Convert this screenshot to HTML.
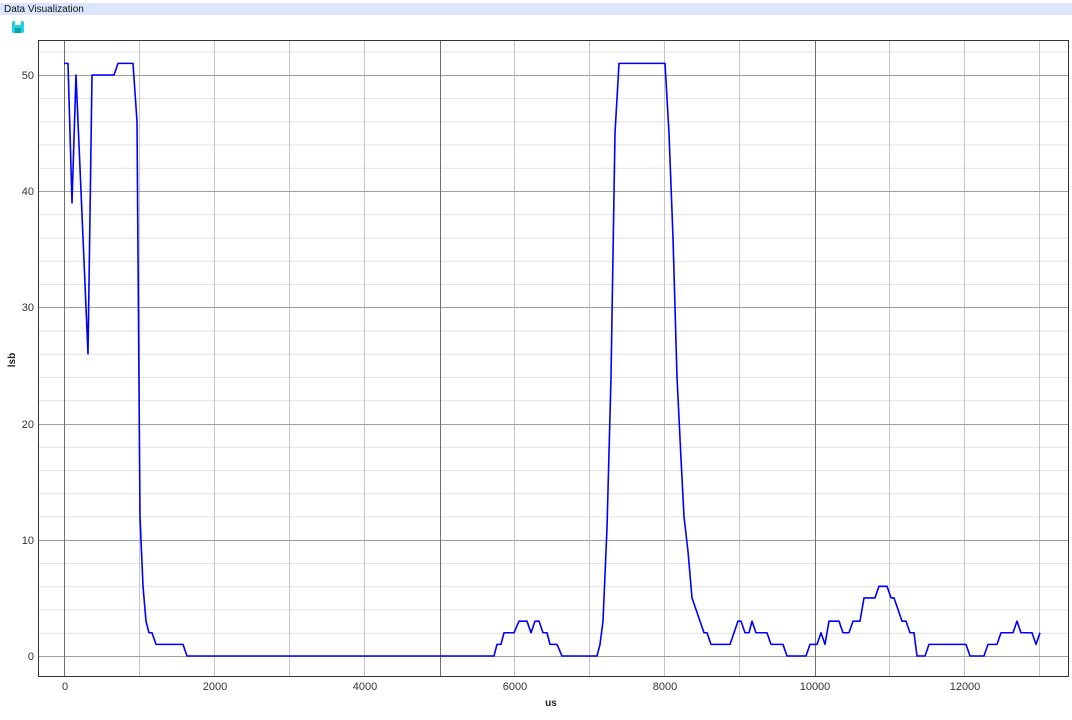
<!DOCTYPE html>
<html><head><style>
body{margin:0;width:1072px;height:720px;background:#fff;font-family:"Liberation Sans",sans-serif;overflow:hidden;position:relative}
.hdr{position:absolute;left:0;top:3px;width:1072px;height:12px;background:#dbe5fd;font-size:10px;line-height:13px;padding-left:4px;color:#111}
</style></head><body>
<div class="hdr">Data Visualization</div>
<svg width="1072" height="720" style="position:absolute;left:0;top:0">
<g>
<rect x="12" y="21" width="12" height="12" rx="2" fill="#22d0dd"/>
<rect x="15" y="21" width="6" height="4" fill="#fff"/>
<rect x="15" y="28" width="6" height="5" fill="#0aa0b0"/>
</g>
<g stroke="#e2e2e2" stroke-width="1">
<line x1="38" x2="1069" y1="633.2" y2="633.2"/><line x1="38" x2="1069" y1="610" y2="610"/><line x1="38" x2="1069" y1="586.7" y2="586.7"/><line x1="38" x2="1069" y1="563.5" y2="563.5"/>
<line x1="38" x2="1069" y1="516.9" y2="516.9"/><line x1="38" x2="1069" y1="493.7" y2="493.7"/><line x1="38" x2="1069" y1="470.5" y2="470.5"/><line x1="38" x2="1069" y1="447.2" y2="447.2"/>
<line x1="38" x2="1069" y1="400.7" y2="400.7"/><line x1="38" x2="1069" y1="377.5" y2="377.5"/><line x1="38" x2="1069" y1="354.2" y2="354.2"/><line x1="38" x2="1069" y1="331" y2="331"/>
<line x1="38" x2="1069" y1="284.5" y2="284.5"/><line x1="38" x2="1069" y1="261.3" y2="261.3"/><line x1="38" x2="1069" y1="238" y2="238"/><line x1="38" x2="1069" y1="214.8" y2="214.8"/>
<line x1="38" x2="1069" y1="168.3" y2="168.3"/><line x1="38" x2="1069" y1="145" y2="145"/><line x1="38" x2="1069" y1="121.8" y2="121.8"/><line x1="38" x2="1069" y1="98.6" y2="98.6"/>
<line x1="38" x2="1069" y1="52" y2="52"/>
</g>
<g stroke="#c4c4c4" stroke-width="1">
<line y1="40" y2="677" x1="139.5" x2="139.5"/><line y1="40" y2="677" x1="214.5" x2="214.5"/><line y1="40" y2="677" x1="289.5" x2="289.5"/><line y1="40" y2="677" x1="364.5" x2="364.5"/>
<line y1="40" y2="677" x1="514.5" x2="514.5"/><line y1="40" y2="677" x1="589.5" x2="589.5"/><line y1="40" y2="677" x1="664.5" x2="664.5"/><line y1="40" y2="677" x1="739.5" x2="739.5"/>
<line y1="40" y2="677" x1="889.5" x2="889.5"/><line y1="40" y2="677" x1="964.5" x2="964.5"/><line y1="40" y2="677" x1="1039.5" x2="1039.5"/>
</g>
<g stroke="#a0a0a0" stroke-width="1">
<line x1="38" x2="1069" y1="656.5" y2="656.5"/><line x1="38" x2="1069" y1="540.5" y2="540.5"/><line x1="38" x2="1069" y1="424.5" y2="424.5"/><line x1="38" x2="1069" y1="307.5" y2="307.5"/><line x1="38" x2="1069" y1="191.5" y2="191.5"/><line x1="38" x2="1069" y1="75.5" y2="75.5"/>
</g>
<g stroke="#707070" stroke-width="1">
<line y1="40" y2="677" x1="64.5" x2="64.5"/><line y1="40" y2="677" x1="440.5" x2="440.5"/><line y1="40" y2="677" x1="815.5" x2="815.5"/>
</g>
<rect x="38.5" y="40.5" width="1030" height="636" fill="none" stroke="#333" stroke-width="1"/>
<polyline fill="none" stroke="#0000ff" stroke-width="1.6" stroke-linejoin="round" transform="translate(0,656) scale(1,-11.62)" vector-effect="non-scaling-stroke"
points="64,51 68,51 72,39 76,50 88,26 92,50 114,50 118,51 133,51 137,46 140,12 143,6 146,3 149,2 152,2 156,1 183,1 187,0 494,0 497,1 501,1 504,2 514,2 519,3 527,3 531,2 535,3 539,3 543,2 547,2 550,1 557,1 562,0 597,0 600,1 603,3 607,11 611,24 615,45 619,51 665,51 669,45 673,36 677,24 681,17 684,12 688,9 692,5 696,4 700,3 704,2 707,2 711,1 730,1 734,2 738,3 741,3 745,2 749,2 752,3 756,2 767,2 771,1 783,1 787,0 806,0 810,1 817,1 821,2 825,1 829,3 839,3 843,2 849,2 853,3 860,3 864,5 875,5 879,6 887,6 891,5 894,5 898,4 902,3 906,3 910,2 914,2 917,0 925,0 929,1 966,1 970,0 984,0 988,1 997,1 1001,2 1013,2 1017,3 1021,2 1032,2 1036,1 1040,2"/>
<g font-size="11" fill="#333" text-anchor="end">
<text x="34" y="660">0</text><text x="34" y="544">10</text><text x="34" y="428">20</text><text x="34" y="311">30</text><text x="34" y="195">40</text><text x="34" y="79">50</text>
</g>
<g font-size="11" fill="#333" text-anchor="middle">
<text x="65" y="690">0</text><text x="215" y="690">2000</text><text x="365" y="690">4000</text><text x="515" y="690">6000</text><text x="665" y="690">8000</text><text x="815" y="690">10000</text><text x="965" y="690">12000</text>
</g>
<text x="551" y="706" font-size="10" font-weight="bold" text-anchor="middle" fill="#222">us</text>
<text transform="translate(15,360) rotate(-90)" font-size="10" font-weight="bold" text-anchor="middle" fill="#222">lsb</text>
</svg>
</body></html>
